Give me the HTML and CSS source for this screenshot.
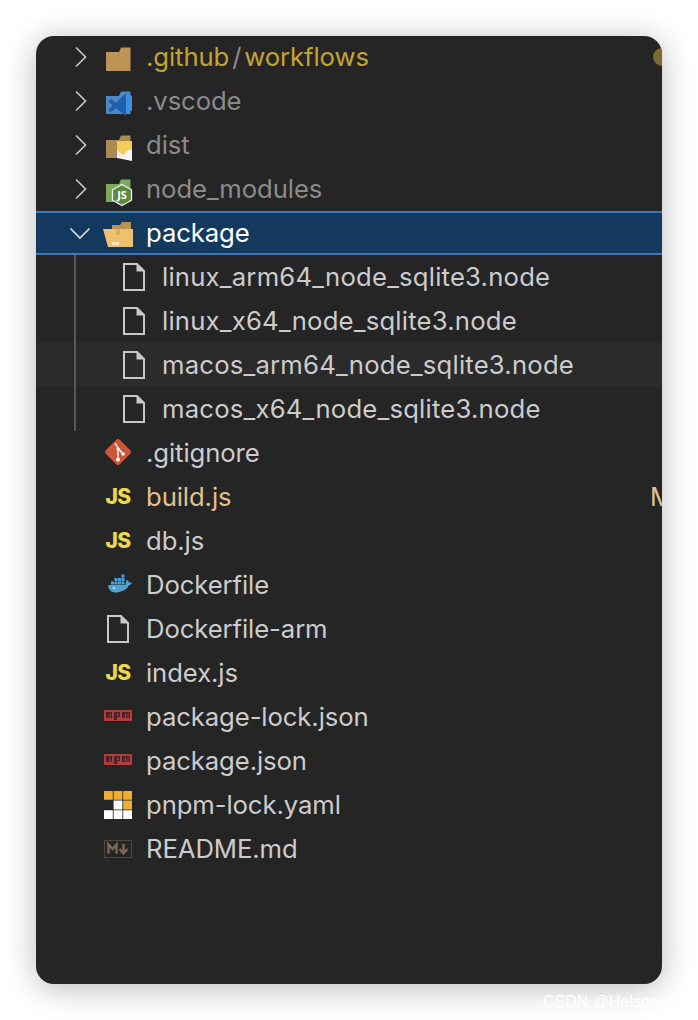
FILE: index.html
```html
<!DOCTYPE html>
<html>
<head>
<meta name="viewport" content="width=device-width, initial-scale=1">
<title>Explorer</title>
<link rel="stylesheet" href="styles.css">
</head>
<body>

<svg class="defs" width="0" height="0">
  <symbol id="closed" viewBox="0 0 24 24"><path d="M8 2.500 17.500 12 8 21.500" fill="none" stroke="#c5c5c5" stroke-width="1.700"/></symbol>
  <symbol id="open" viewBox="0 0 24 24"><path d="M2.500 7.500 12 17l9.500-9.500" fill="none" stroke="#d8dde2" stroke-width="1.700"/></symbol>
  <symbol id="file" viewBox="0 0 28 28"><path d="M4 1h13l7 7v19H4z" fill="none" stroke="#c8c8c8" stroke-width="2"/><path d="M16.500 1v7.500H24" fill="#c8c8c8"/></symbol>
  <symbol id="npm" viewBox="0 0 28 28">
    <path d="M0 7h28v11H0z" fill="#b23b3b"/>
    <path d="M2 9h6v6H6.500v-4.500h-1V15H2zM10 9h6v5h-3v3h-3zm3 1.500V13h1.500v-2.500zM18 9h8v6h-1.500v-4.500h-1V15h-1.500v-4.500h-1V15H18z" fill="#4a2324"/>
  </symbol>
</svg>

<main class="window">

  <div class="row">
    <svg class="twist"><use href="#closed"/></svg>
    <svg class="icon" viewBox="0 0 28 28">
      <path d="M2 9h13l1-2 1-2.500h9.500V28H2z" fill="#bc9456"/>
    </svg>
    <span class="name modified-dir">.github<i class="sep">/</i>workflows</span>
    <span class="dot"></span>
  </div>

  <div class="row dim">
    <svg class="twist"><use href="#closed"/></svg>
    <svg class="icon" viewBox="0 0 28 28">
      <path d="M2 9h13l2-4.500h9.500V27H2z" fill="#4d88c7"/>
      <path d="M28 9l-6-3.500v21l6-3z" fill="#3f8ee0"/>
      <path d="M22 6 12 16 7 12l-3 2 4.500 4.500L4 23l3 2 5-4 10 8z" fill="#1d5fa8"/>
    </svg>
    <span class="name">.vscode</span>
  </div>

  <div class="row dim">
    <svg class="twist"><use href="#closed"/></svg>
    <svg class="icon" viewBox="0 0 28 28">
      <path d="M2 9h13l2-4.500h9.500V27H2z" fill="#ad8a54"/>
      <path d="M13 10h15v20l-15-3z" fill="#f4f4f2"/>
      <path d="M13 10h15v9c-4-1-6 1-8 5-3-1-5-3-7-5z" fill="#f3cd55"/>
    </svg>
    <span class="name">dist</span>
  </div>

  <div class="row dim">
    <svg class="twist"><use href="#closed"/></svg>
    <svg class="icon" viewBox="0 0 28 28">
      <path d="M2 9h13l2-4.500h9.500V27H2z" fill="#7cab58"/>
      <path d="M18 9.500l9.500 5.300v10.400L18 30.500l-9.500-5.300V14.800z" fill="#5b8a40" stroke="#f2f2f2" stroke-width="1.300"/>
      <text class="node-js" x="18" y="24">JS</text>
    </svg>
    <span class="name">node_modules</span>
  </div>

  <div class="row selected">
    <svg class="twist"><use href="#open"/></svg>
    <svg class="icon" viewBox="0 0 28 28">
      <path d="M8 10V6h8l2-3h9v10z" fill="#b99354"/>
      <path d="M-1 10h30v18H4z" fill="#eec26d"/>
      <path d="M12 10h4v6h-4z" fill="#dcae5d"/>
      <path d="M8 23h7v3H8z" fill="#f7e6c4"/>
    </svg>
    <span class="name">package</span>
  </div>

  <div class="group">
    <div class="row nested">
      <svg class="icon"><use href="#file"/></svg>
      <span class="name">linux_arm64_node_sqlite3.node</span>
    </div>
    <div class="row nested">
      <svg class="icon"><use href="#file"/></svg>
      <span class="name">linux_x64_node_sqlite3.node</span>
    </div>
    <div class="row nested hover">
      <svg class="icon"><use href="#file"/></svg>
      <span class="name">macos_arm64_node_sqlite3.node</span>
    </div>
    <div class="row nested">
      <svg class="icon"><use href="#file"/></svg>
      <span class="name">macos_x64_node_sqlite3.node</span>
    </div>
  </div>

  <div class="row flat">
    <svg class="icon" viewBox="0 0 28 28">
      <rect x="4.100" y="3.100" width="19.800" height="19.800" rx="2.500" transform="rotate(45 14 13)" fill="#cf5539"/>
      <path d="M11 4l3 5v11M14 9l5 6" fill="none" stroke="#fff" stroke-width="1.400"/>
      <circle cx="14" cy="20.500" r="2" fill="#fff"/><circle cx="14" cy="10" r="1.600" fill="#fff"/><circle cx="19" cy="15" r="1.800" fill="#fff"/>
    </svg>
    <span class="name">.gitignore</span>
  </div>

  <div class="row flat">
    <span class="icon js">JS</span>
    <span class="name modified">build.js</span>
    <span class="flag">M</span>
  </div>

  <div class="row flat">
    <span class="icon js">JS</span>
    <span class="name">db.js</span>
  </div>

  <div class="row flat">
    <svg class="icon" viewBox="0 0 28 28">
      <path d="M4 14h17c.8-.1 1-.6.700-3.200l1.500-2c1 1 1.600 1.700 1.800 2.800 1-.2 2-.1 3 .4-.6 1.500-1.800 2-3 2.100C23.500 18 19 21 13 21.500 7.500 22 4.500 19 4 14z" fill="#4fa3d4"/>
      <path d="M7 10.500h3v3H7zm3.500 0h3v3h-3zm3.500 0h3v3h-3zm3.500 0h3v3h-3zM10.500 7h3v3h-3zM14 7h3v3h-3zm3.500 0h3v3h-3zm0-3.500h3v3h-3z" fill="#4fa3d4"/>
      <circle cx="10" cy="17" r="1.100" fill="#d4ecf7"/>
    </svg>
    <span class="name">Dockerfile</span>
  </div>

  <div class="row flat">
    <svg class="icon"><use href="#file"/></svg>
    <span class="name">Dockerfile-arm</span>
  </div>

  <div class="row flat">
    <span class="icon js">JS</span>
    <span class="name">index.js</span>
  </div>

  <div class="row flat">
    <svg class="icon"><use href="#npm"/></svg>
    <span class="name">package-lock.json</span>
  </div>

  <div class="row flat">
    <svg class="icon"><use href="#npm"/></svg>
    <span class="name">package.json</span>
  </div>

  <div class="row flat">
    <svg class="icon" viewBox="0 0 28 28">
      <path d="M0 0h8.800v8.800H0zm9.600 0h8.800v8.800H9.600zm9.600 0H28v8.800h-8.800zm0 9.600H28v8.800h-8.800z" fill="#f0ad30"/>
      <path d="M9.600 9.600h8.800v8.800H9.600zM0 19.200h8.800V28H0zm9.600 0h8.800V28H9.600zm9.600 0H28V28h-8.800z" fill="#fff"/>
    </svg>
    <span class="name">pnpm-lock.yaml</span>
  </div>

  <div class="row flat">
    <svg class="icon" viewBox="0 0 28 28">
      <rect x=".5" y="5.500" width="27" height="17" fill="none" stroke="#54473a"/>
      <path d="M4.500 18.500V9.500L8.500 14l4-4.500v9" fill="none" stroke="#7b6a55" stroke-width="2.400"/>
      <path d="M19.500 9v9M15.500 14l4 4.500 4-4.500" fill="none" stroke="#7b6a55" stroke-width="2.400"/>
    </svg>
    <span class="name">README.md</span>
  </div>

</main>

<footer class="mark">CSDN @Helson@</footer>

</body>
</html>
```

FILE: styles.css
```css
* {
  box-sizing: border-box;
}

html, body {
  margin: 0;
  height: 100%;
  overflow: hidden;
}

body {
  background-color: #fff;
  padding: 36px 36px 0 36px;
  font-family: Inter, "Liberation Sans", sans-serif;
}

.defs {
  position: absolute;
}

.window {
  width: 626px;
  height: 948px;
  background-color: #252526;
  border-radius: 18px;
  overflow: hidden;
  box-shadow: 0 4px 32px rgba(0, 0, 0, 0.28);
  color: #cccccc;
  font-size: 25.7px;
  letter-spacing: -0.1px;
}

.row {
  display: flex;
  align-items: center;
  height: 44px;
  padding-left: 32px;
}

/* first row starts one pixel above the window edge */
.window > .row:first-child {
  margin-top: -1px;
}

.row.flat {
  padding-left: 68px;
}

.row.nested {
  padding-left: 84px;
  letter-spacing: 0.2px;
}

.row.dim .name {
  color: #8b8b8b;
}

.row.selected {
  background-color: #133a5e;
  border-top: 2px solid #3a78bd;
  border-bottom: 2px solid #3a78bd;
  color: #fff;
}

.row.hover {
  background-color: #2b2b2c;
}

.twist {
  flex: none;
  width: 24px;
  height: 24px;
  margin-right: 12px;
}

.icon {
  flex: none;
  width: 28px;
  height: 28px;
  margin-right: 14px;
  overflow: visible;
}

.js {
  display: block;
  color: #ecd94f;
  font-family: Inter, sans-serif;
  font-size: 21px;
  font-weight: 800;
  letter-spacing: -0.5px;
  line-height: 28px;
  text-align: center;
}

.node-js {
  fill: #fff;
  font-family: "Open Sans", sans-serif;
  font-size: 11px;
  font-weight: 700;
  letter-spacing: 0;
  text-anchor: middle;
}

.name {
  margin-top: -2px;
  white-space: nowrap;
}

.modified-dir {
  color: #c5a332;
}

.sep {
  font-style: normal;
  margin: 0 3px;
  color: #8b8b8b;
}

.modified {
  color: #e2c08d;
}

.dot {
  width: 18px;
  height: 18px;
  margin-left: auto;
  margin-right: -9px;
  border-radius: 50%;
  background-color: #7f6b2e;
}

.flag {
  margin-top: -2px;
  margin-left: auto;
  margin-right: -9px;
  width: 21px;
  color: #e2c08d;
}

.group {
  position: relative;
}

/* indent guide */
.group::before {
  content: "";
  position: absolute;
  left: 38px;
  top: 0;
  bottom: 0;
  width: 2px;
  background-color: #585858;
}

.mark {
  margin: 9px 0 0 507px;
  color: #fff;
  font-family: "Liberation Sans", sans-serif;
  font-size: 16px;
  white-space: nowrap;
}
```
